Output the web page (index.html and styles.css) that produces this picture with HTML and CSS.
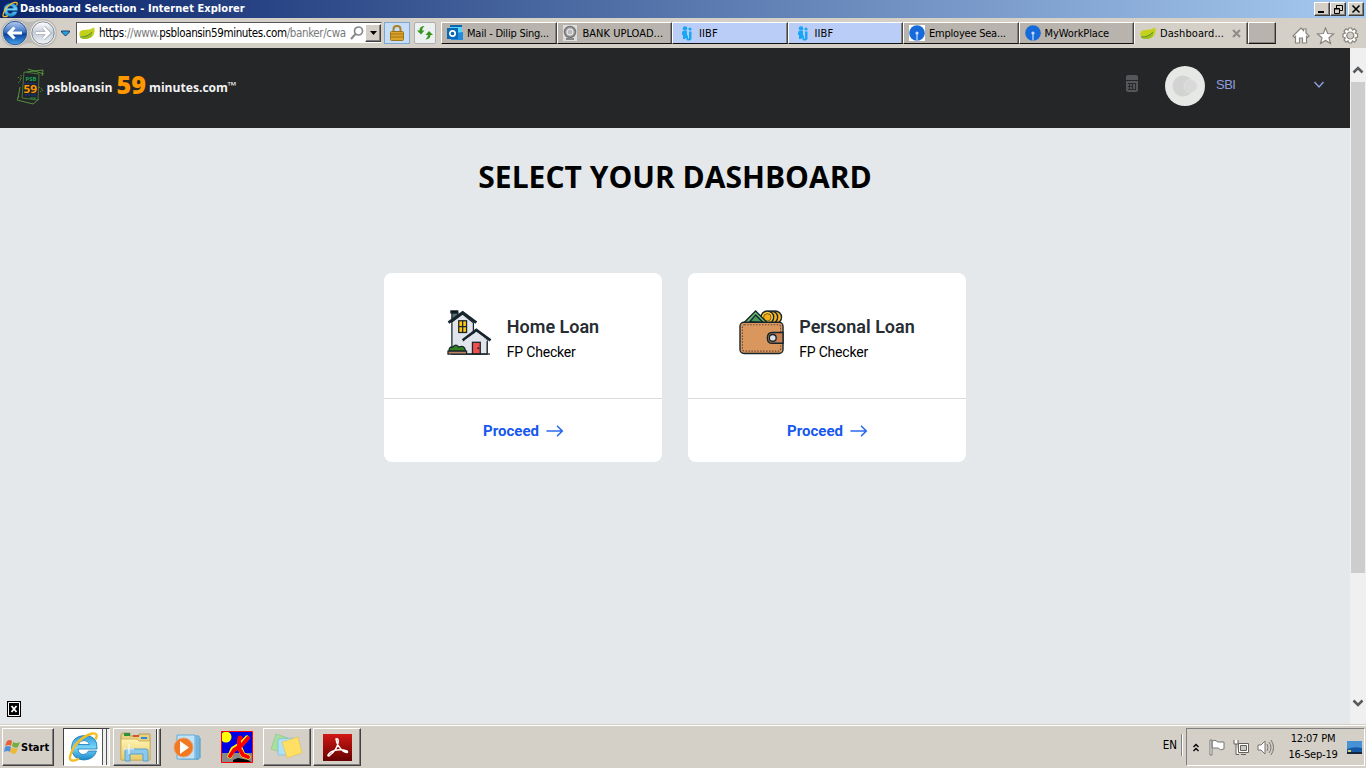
FILE: index.html
```html
<!DOCTYPE html>
<html lang="en">
<head>
<meta charset="utf-8">
<title>Dashboard Selection</title>
<link rel="stylesheet" href="styles.css">
</head>
<body>
<svg width="0" height="0" class="defs">
<defs>
<linearGradient id="ball" x1="0" y1="0" x2="0" y2="1"><stop offset="0" stop-color="#b4cdef"/><stop offset=".45" stop-color="#3e74c4"/><stop offset=".55" stop-color="#0c439c"/><stop offset="1" stop-color="#45a4ee"/></linearGradient>
<linearGradient id="pale" x1="0" y1="0" x2="0" y2="1"><stop offset="0" stop-color="#fff"/><stop offset=".5" stop-color="#c3cbd8"/><stop offset="1" stop-color="#f3f6fa"/></linearGradient>
<linearGradient id="ieblue" x1="0" y1="0" x2="0" y2="1"><stop offset="0" stop-color="#2c9ddd"/><stop offset=".5" stop-color="#79d5fa"/><stop offset="1" stop-color="#1688cb"/></linearGradient>
<linearGradient id="gold" x1="0" y1="0" x2="0" y2="1"><stop offset="0" stop-color="#fff3b2"/><stop offset="1" stop-color="#e8cb68"/></linearGradient>
<linearGradient id="red" x1="0" y1="0" x2="0" y2="1"><stop offset="0" stop-color="#d21713"/><stop offset="1" stop-color="#650303"/></linearGradient>
<symbol id="ie" viewBox="0 0 32 32"><path d="M28.500 20H20.500Q18.500 23.500 15.500 23.500Q10.500 23.500 10 18H29Q30 4.500 16.500 4.500Q4 5 3.500 16.500Q4 28.500 16 29Q26 28.500 28.500 20ZM10.300 13.500Q11.500 9.500 16 9.500Q20.500 9.700 21.500 13.500Z" fill="url(#ieblue)" stroke="#1679b3" stroke-width=".8" fill-rule="evenodd"/><path d="M27.500 8.500Q31 1.500 24 2.500Q13 5.500 6 16Q-1 29 4 29.500Q7 30 11 27.500" fill="none" stroke="#f4bd26" stroke-width="2.400"/></symbol>
<symbol id="leaf" viewBox="0 0 16 13"><path d="M.5 9Q-.5 3 5 3Q11 3 15 .5Q17 6 13 10Q7 14 .5 9Z" fill="#c5d01d"/><path d="M1 10.500Q9 10 13 4.500Q14 10 9 11.500Q4 13 1 10.500Z" fill="#9dbd20"/><path d="M1 10Q9 10 13 5" fill="none" stroke="#57952f"/></symbol>
<symbol id="iibf" viewBox="0 0 10 15"><g fill="#19a6f5"><circle cx="3" cy="2.500" r="2.300"/><circle cx="8" cy="3" r="1.600"/><path d="M1 5H5V9L6 10V13L4 12L3 13H1V9H0V6ZM7 5.500H9.500V13Q8 15.500 4.500 14V12.500H7Z"/></g></symbol>
<symbol id="sbi" viewBox="0 0 16 16"><circle cx="8" cy="8" r="7.800" fill="#176ad9"/><circle cx="8" cy="8" r="1.600" fill="#c6dfff"/><path d="M7.400 8H8.600V15.500H7.400Z" fill="#c6dfff"/></symbol>
<symbol id="arrow" viewBox="0 0 18 12"><path d="M1 6H16M11.500 1.200L16.300 6L11.500 10.800" fill="none" stroke="#2b6bef" stroke-width="1.600" stroke-linecap="round"/></symbol>
</defs>
</svg>
<div class="screen">
<header class="titlebar">
<svg class="title-icon" width="17" height="17"><use href="#ie"/></svg>
<span class="window-title">Dashboard Selection - Internet Explorer</span>
<div class="window-buttons">
<span class="winbtn"><svg width="12" height="10"><path d="M2 7H8V9H2Z"/></svg></span>
<span class="winbtn"><svg width="12" height="10"><path d="M4.500 1V4M4 1.500H10.500V6.500H8M2.500 4.500H7.500V9.500H2.500ZM2 5H8" fill="none" stroke="#000"/></svg></span>
<span class="winbtn close"><svg width="12" height="10"><path d="M2.500 1.500L9.500 8.500M9.500 1.500L2.500 8.500" stroke="#000" stroke-width="1.600"/></svg></span>
</div>
</header>
<nav class="toolbar">
<svg class="navballs" width="74" height="28" viewBox="0 0 74 28"><path d="M1 14C1 5 8 0 16 0C23 0 22 3 29 3C36 3 35 0 43 0C51 0 57 6 57 14C57 22 51 28 43 28C36 28 36 24 29 24C22 24 23 28 15 28C7 28 1 22 1 14Z" fill="#bcbab5"/><circle cx="15" cy="14" r="12.500" fill="#eee"/><circle cx="15" cy="14" r="11.700" fill="url(#ball)" stroke="#32558d"/><circle cx="43" cy="14" r="12.500" fill="#eee"/><circle cx="43" cy="14" r="11.200" fill="url(#pale)" stroke="#858a91"/><path d="M22 14H9M14.500 8.500L9 14L14.500 19.500" fill="none" stroke="#fff" stroke-width="3"/><path d="M36 14H49M43.500 8.500L49 14L43.500 19.500" fill="none" stroke="#9ca3ad" stroke-width="4"/><path d="M36 14H49M43.500 8.500L49 14L43.500 19.500" fill="none" stroke="#fff" stroke-width="2.600"/><path d="M61.500 12H69.500V13L65.500 17L61.500 13Z" fill="#2aa3dd" stroke="#173d72"/></svg>
<div class="address"><svg width="16" height="13"><use href="#leaf"/></svg><span class="url">https<i>://www.</i>psbloansin59minutes.com<i>/banker/cwa</i></span><svg class="magnify" width="14" height="14"><circle cx="8.500" cy="5" r="4" fill="none" stroke="#85888a" stroke-width="1.700"/><path d="M5.500 8L1 13" stroke="#85888a" stroke-width="2"/></svg><span class="dropdown"><svg width="7" height="4"><path d="M0 0H7L3.500 4Z"/></svg></span></div>
<span class="tool lock"><svg width="14" height="16"><path d="M3.500 8V4Q3.500 1 7 1Q10.500 1 10.500 4V8" fill="none" stroke="#a98228" stroke-width="2"/><rect x=".5" y="6.500" width="13" height="9" rx="1" fill="#dfa326" stroke="#9a741e"/><path d="M1 9H13M1 12H13" stroke="#9e7420"/></svg></span>
<span class="tool refresh"><svg width="16" height="14" fill="#36951c"><path d="M7.500 0Q2.500 0 2.500 4.500H0L4 8.500L7.500 4.500H5Q5 2 7.500 0ZM8.500 13.500Q13.500 13 13.500 9H16L12 5L8.500 9H11Q11 11.500 8.500 13.500Z"/></svg></span>
<div class="tabs">
<div class="tab"><svg width="16" height="16"><path d="M3 0H15V12H3Z" fill="#57d5fa"/><path d="M3 0H15V2H3Z" fill="#1264af"/><path d="M8 8L16 7V15H4V12Z" fill="#238bdc"/><rect y="3" width="11" height="11" fill="#0868b8"/><circle cx="5.500" cy="8.500" r="2.700" fill="none" stroke="#fff" stroke-width="1.700"/></svg><span>Mail - Dilip Sing...</span></div>
<div class="tab"><svg width="14" height="16"><path d="M0 0H14V16H0Z" fill="#ddd"/><circle cx="7" cy="7" r="5.500" fill="#aaa" stroke="#777" stroke-width="1.500"/><circle cx="7" cy="7" r="3" fill="#bbb" stroke="#eee"/><path d="M3 13H11V15H3Z" fill="#888"/></svg><span class="bank">BANK UPLOAD...</span></div>
<div class="tab blue"><svg width="10" height="15"><use href="#iibf"/></svg><span>IIBF</span></div>
<div class="tab blue"><svg width="10" height="15"><use href="#iibf"/></svg><span>IIBF</span></div>
<div class="tab"><svg class="whitebox" width="16" height="16"><use href="#sbi"/></svg><span>Employee Sea...</span></div>
<div class="tab"><svg width="16" height="16"><use href="#sbi"/></svg><span class="work">MyWorkPlace</span></div>
<div class="tab active"><svg width="16" height="13"><use href="#leaf"/></svg><span class="dash">Dashboard...</span><svg class="tabclose" width="9" height="9"><path d="M1 1L8 8M8 1L1 8" stroke="#8d8b88" stroke-width="2"/></svg></div>
<div class="newtab"></div>
</div>
<svg class="browser-icons" width="70" height="18" fill="#fff" stroke="#87837d" stroke-width="1.200"><path d="M1 9L9 1L11.500 3.500V2H14V6L17 9L15.500 10.500L14.500 9.500V16H10.500V11H7.500V16H3.500V9.500L2.500 10.500Z"/><path d="M33.500 1L35.700 6.500L41.500 7L37 10.800L38.500 16.500L33.500 13.500L28.500 16.500L30 10.800L25.500 7L31.300 6.500Z"/><path fill-rule="evenodd" d="M57 1H59.500L60.500 3.200L62.500 1.800L64.500 4L63.200 6L65.500 7V10L63.200 11L64.500 13L62.500 15.200L60.500 13.800L59.500 16H57L56 13.800L54 15.200L52 13L53.300 11L51 10V7L53.300 6L52 4L54 1.800L56 3.200ZM58.300 5A3.500 3.500 0 1 0 58.310 5Z"/></svg>
</nav>
<div class="viewport">
<main class="page">
<header class="site-header">
<svg class="logo" width="224" height="40" viewBox="0 0 224 40"><g fill="none" stroke="#57903b"><path d="M12 2L28 7M10 5L27 3L26 9M3 29L1 33L17 37L23 32M4 20L2 31"/><path d="M2 10L5 13L2 16M5 8V12M23 20L27 23L24 25" stroke-dasharray="1.500 1"/></g><path d="M8 5L23 7L22 33L6 31Z" fill="#1f2428" stroke="#4f8d38" stroke-width=".8"/><text x="9.500" y="14" class="logo-psb" textLength="11" lengthAdjust="spacingAndGlyphs">PSB</text><path d="M8 16.500H21M9 28H21" stroke="#1d3080" stroke-width="1.500" stroke-dasharray="2 1"/><path d="M14 31H20" stroke="#208345" stroke-width="1.300"/><text x="7.500" y="26" class="logo-small" textLength="13.500" lengthAdjust="spacingAndGlyphs">59</text><text x="30.500" y="24.500" class="logo-word" textLength="66" lengthAdjust="spacingAndGlyphs">psbloansin</text><text x="100.500" y="27" class="logo-big" textLength="29.500" lengthAdjust="spacingAndGlyphs">59</text><text x="133" y="24.500" class="logo-word" textLength="79" lengthAdjust="spacingAndGlyphs">minutes.com</text><text x="211.500" y="22" class="logo-tm" textLength="9" lengthAdjust="spacingAndGlyphs">™</text></svg>
<svg class="calculator" width="12" height="17"><path d="M2 0H10Q12 0 12 2V5H0V2Q0 0 2 0ZM0 6H12V15Q12 17 10 17H2Q0 17 0 15Z" fill="#55565a"/><path d="M2 8.500H10M2 11.500H7M2 14.500H10M3.500 8V15M6.500 8V15M9.500 8V15" stroke="#292a2c"/></svg>
<svg class="avatar" width="40" height="40"><circle cx="20" cy="20" r="20" fill="#e5e8e5"/><circle cx="18" cy="20" r="10.500" fill="#d3d3d3"/><circle cx="25.500" cy="20" r="6.500" fill="#d9d9d9" stroke="#e3e3e3" stroke-width=".6"/></svg>
<span class="user">SBI</span>
<svg class="chevron" width="12" height="8"><path d="M1.500 1L6 6L10.500 1" fill="none" stroke="#8e9ddd" stroke-width="1.500"/></svg>
</header>
<h1>SELECT YOUR DASHBOARD</h1>
<div class="cards">
<section class="card">
<div class="product"><svg width="45" height="45" viewBox="0 0 46 46" stroke="#17262c" stroke-width="1.300"><path d="M5 12L16 4L27 13V24L41 31V45H5Z" fill="#e2e5eb"/><path d="M5 3H11V7L5 12Z" fill="#61717b"/><path d="M4 1H11V3H4Z"/><path d="M1.500 13L16 2.500L30 13M16 31L30 20.500L44.500 31" fill="none" stroke-width="2.800"/><rect x="12" y="11" width="8" height="12" fill="#ffc80b"/><path d="M16 11V23M12 17H20"/><path d="M18 31L30 22.500L41 31V44H18Z" fill="#e2e5eb" stroke="none"/><path d="M41 32V44" fill="none"/><rect x="26" y="33" width="8" height="12" fill="#ef4f4e"/><path d="M2 42Q2 37 6 38Q9 34 12 38Q18 35 19 42Z" fill="#327f1d"/><path d="M1 42H20V45H1Z" fill="#bd8263"/><path d="M20 45H44"/><circle cx="32" cy="39" r=".4"/></svg><div><h2>Home Loan</h2><p>FP Checker</p></div></div>
<a class="proceed">Proceed<svg width="18" height="12"><use href="#arrow"/></svg></a>
</section>
<section class="card">
<div class="product"><svg width="45" height="45" viewBox="0 0 46 46" stroke="#17252b" stroke-width="1.400"><circle cx="37" cy="7.500" r="6.500" fill="#f7b624"/><circle cx="33" cy="7.500" r="6.500" fill="#f7b624"/><circle cx="29" cy="7.500" r="6.500" fill="#ffc632"/><circle cx="29" cy="7.500" r="3.800" fill="#f4ae17" stroke-width=".6"/><path d="M5 13L17 1L29 13Z" fill="#69bd71"/><path d="M11 12L17 5L25 13Z" fill="#48985b"/><rect x="1" y="12.500" width="44" height="32" rx="4" fill="#d9965d"/><rect x="3.500" y="15" width="39" height="27" rx="2" fill="none" stroke="#694837" stroke-width="1.100" stroke-dasharray="1.500 1.500"/><path d="M45 23H34Q29 23 29 28.500Q29 34 34 34H45Z" fill="#c88050"/><circle cx="34.500" cy="28.500" r="3.500" fill="#dbe0e7"/></svg><div><h2>Personal Loan</h2><p>FP Checker</p></div></div>
<a class="proceed">Proceed<svg width="18" height="12"><use href="#arrow"/></svg></a>
</section>
</div>
<svg class="missing" width="14" height="16"><path d="M0 0H14V16H0Z"/><path d="M1.500 1.500H12.500V14.500H1.500Z" fill="none" stroke="#fff"/><path d="M4.500 5L9.500 11M9.500 5L4.500 11" stroke="#fff" stroke-width="1.800"/></svg>
</main>
<aside class="scrollbar"><svg width="12" height="8"><path d="M1.500 6.500L6 2L10.500 6.500" fill="none" stroke="#58595b" stroke-width="2.500"/></svg><div class="thumb"></div><svg class="down" width="12" height="8"><path d="M1.500 1.500L6 6L10.500 1.500" fill="none" stroke="#58595b" stroke-width="2.500"/></svg></aside>
</div>
<footer class="taskbar">
<button class="start"><svg width="16" height="14"><path d="M3 1Q6 -1 8 1L7 6Q5 4 1 6Z" fill="#e66137"/><path d="M9 2Q12 4 16 2L14 7Q11 9 8 6Z" fill="#75ae43"/><path d="M1 7Q4 5 7 7L6 12Q4 10 0 12Z" fill="#548ed7"/><path d="M8 7Q10 10 14 8L12 13Q9 15 6 12Z" fill="#edb92f"/></svg><span>Start</span></button>
<div class="task ie-task"><svg width="32" height="32"><use href="#ie"/></svg></div>
<div class="task folder-task"><svg width="34" height="32"><path d="M2 4Q2 2 4 2H11V5H20V3H31V29H2Z" fill="#ead181" stroke="#b79b55"/><path d="M5 2H11V5H5Z" fill="#27943c"/><path d="M14 4H20V6H14Z" fill="#d3562b"/><path d="M22 6H28V8H22Z" fill="#2b8ad7"/><path d="M2 8H18L20 10H31V29H2Z" fill="url(#gold)" stroke="#cfb35d"/><path d="M6 29V20Q6 18 8 18H27Q29 18 29 20V30H24V23H11V30H6Z" fill="#8bc9ed" stroke="#5a9fcb"/><path d="M10 13V23M5 18H15" stroke="#fff" stroke-width="1"/></svg></div>
<svg class="media" width="30" height="28"><path d="M8 2H26V25H8Z" fill="#a6d1ed" stroke="#4b9fd2"/><path d="M4 1H22V25H4Z" fill="#c1e3f7" stroke="#64abd7"/><path d="M24 3V26M27 4V24" stroke="#4195cb"/><circle cx="10.500" cy="13.500" r="9.500" fill="#f27822" stroke="#e6a475"/><path d="M7 7L16 13.500L7 20Z" fill="#fff"/></svg>
<svg class="runner" width="32" height="32"><path d="M.5 .5H31.500V31.500H.5Z" fill="#0000e7"/><path d="M1 22H31V31H1Z" fill="#888"/><circle cx="5" cy="6" r="5.500" fill="#ff0"/><path d="M12 29L17 27L27 29L30 31H12Z"/><path d="M26 7L20 13L12 18L9 25M19 17L22 24L27 26" stroke="#ff0" stroke-width="5" fill="none" stroke-linejoin="round" stroke-linecap="round"/><path d="M27 7L21 14L13 19L9 25M18 9V17L22 24L27 26" stroke="#f00" stroke-width="4" fill="none" stroke-linejoin="round" stroke-linecap="round"/><circle cx="19" cy="7" r="2.500" fill="#f00"/><path d="M.5 .5H31.500V31.500H.5Z" fill="none" stroke="#f00"/></svg>
<div class="task sticky"><svg width="34" height="28"><path d="M6 1L18 5L13 20L1 16Z" fill="#a7df9c" stroke="#82bd7b" stroke-width=".5"/><path d="M8 6L23 5L24 22L8 22Z" fill="#aee0f8" stroke="#6baed9" stroke-width=".5"/><path d="M12 9L28 4L32 20L17 25Z" fill="#ffdf64" stroke="#dab746" stroke-width=".5"/></svg></div>
<div class="task pdf"><svg width="29" height="27"><path d="M0 0H29V27H0Z" fill="url(#red)"/><path d="M13 5Q16 4 15 9Q14 16 6 22Q3 22 8 18Q15 14 24 17Q26 20 20 17Q14 12 13 5Z" fill="none" stroke="#fff" stroke-width="1.500"/></svg></div>
<span class="language">EN</span>
<div class="tray"><svg class="caret" width="6" height="9"><path d="M.5 4L3 1.500L5.500 4M.5 8L3 5.500L5.500 8" fill="none" stroke="#000" stroke-width="1.400"/></svg><svg width="17" height="17" fill="#fff" stroke="#777"><path d="M1 1H3V16H1ZM3 2Q6 0 9 3H15V10Q11 12 9 9H3Z"/></svg><svg width="17" height="17" fill="#fff" stroke="#66625b"><path d="M5.500 4.500H15.500V13.500H5.500ZM8 15.500H13M1 1V5H5V1M3 5V15.500H6"/><path d="M7.500 6.500H13.500V11.500H7.500Z" fill="#c8c8c4"/></svg><svg width="17" height="17" fill="#fff" stroke="#77736d"><path d="M1 6H4L8 2V15L4 11H1Z"/><path d="M10 5Q12 8.500 10 12M12 3Q16 8.500 12 14M14 1Q19 8.500 14 16" fill="none"/></svg><div class="clock"><span>12:07 PM</span><span>16-Sep-19</span></div><svg width="15" height="13"><path d="M0 0H15V13H0Z" fill="#1558a5"/><path d="M0 0H15V7Q7 5 0 8Z" fill="#4692d5"/><path d="M0 11H15V13H0Z" fill="#14243e"/><path d="M1 9H4V11H1Z" fill="#d9ce63"/></svg></div>
</footer>
</div>
</body>
</html>
```

FILE: styles.css
```css
* { box-sizing: border-box; }
body { margin: 0; overflow: hidden; font-family: Roboto, sans-serif; }
svg { display: block; flex-shrink: 0; }
.defs { position: absolute; }
.screen { width: 1366px; height: 768px; display: flex; flex-direction: column; background: #d4d0c8; }
.titlebar { height: 18px; display: flex; align-items: center; padding: 0 2px; background: linear-gradient(90deg, #0a246a, #a6caf0); font-family: "DejaVu Sans Condensed", "DejaVu Sans", sans-serif; }
.window-title { color: #fff; font-size: 11px; font-weight: bold; line-height: 18px; margin-left: 1px; letter-spacing: .06px; white-space: nowrap; }
.window-buttons { margin-left: auto; display: flex; }
.winbtn { width: 16px; height: 14px; padding: 1px; background: #d4d0c8; border: 1px solid; border-color: #fff #404040 #404040 #fff; box-shadow: inset -1px -1px #808080; }
.close { margin-left: 2px; }
.toolbar { height: 30px; display: flex; align-items: flex-start; font-family: "DejaVu Sans Condensed", "DejaVu Sans", sans-serif; font-size: 11px; }
.navballs { margin-top: 1px; }
.address { height: 22px; width: 306px; display: flex; align-items: center; padding-left: 2px; margin: 4px 0 0 2px; background: #fff; border: 1px solid; border-color: #555 #d4d0c8 #d4d0c8 #555; }
.url { width: 249px; margin: 0 2px 0 4px; font-size: 11.500px; letter-spacing: -.37px; white-space: nowrap; }
.url i { color: #77797b; font-style: normal; }
.dropdown { width: 16px; height: 18px; display: grid; place-items: center; margin-left: 1px; background: #d4d0c8; border: 1px solid; border-color: #fff #404040 #404040 #fff; box-shadow: inset -1px -1px #808080; }
.tool { display: grid; place-items: center; height: 22px; margin-top: 4px; }
.lock { width: 26px; margin-left: 2px; background: #c6ddf8; border: 1px solid #82a5cd; }
.refresh { width: 22px; margin-left: 4px; border: 1px solid #aeb0b1; border-radius: 2px; background: #edf0f1; }
.tabs { display: flex; margin: 4px 0 0 5px; height: 22px; }
.tab { display: flex; align-items: center; width: 115.500px; height: 22px; padding-left: 5px; gap: 4px; background: #b8b4ad; border: 1px solid; border-color: #fff #444 #111 #fff; box-shadow: inset -1px 0 #85817b; letter-spacing: -.22px; white-space: nowrap; }
.tab.blue { background: #b9cdf7; padding-left: 9px; gap: 7px; letter-spacing: .1px; }
.bank { letter-spacing: .02px; margin-left: 2px; }
.work { letter-spacing: -.1px; }
.whitebox { background: #fff; }
.tab.active { width: 114px; background: #d4d0c8; border-bottom: 0; }
.dash { letter-spacing: .08px; }
.tabclose { margin-left: 4px; }
.newtab { width: 28px; background: #b8b4ad; border: 1px solid; border-color: #fff #333 #111 #fff; box-shadow: inset -1px -1px #85817b; }
.browser-icons { margin: 9px 0 0 auto; margin-right: 4px; }
.viewport { display: flex; height: 676px; }
.page { width: 1350px; display: flex; flex-direction: column; align-items: center; background: #e4e8eb; }
.site-header { width: 100%; height: 80px; display: flex; align-items: flex-start; background: #252628; }
.logo { margin: 19px 0 0 16px; font-family: "Open Sans", sans-serif; font-weight: bold; }
.logo-psb { font-size: 6px; fill: #1ba650; }
.logo-small { font-size: 11px; fill: #ff9800; }
.logo-word { font-size: 12px; fill: #f2f2f2; }
.logo-big { font-size: 24px; font-weight: 800; fill: #ff9800; }
.logo-tm { font-size: 10px; fill: #eee; }
.calculator { margin: 27px 0 0 886px; }
.avatar { margin: 18px 0 0 27px; }
.user { margin: 28px 0 0 11px; color: #8f9ddd; font-size: 13px; line-height: 18px; letter-spacing: -.5px; font-family: "Liberation Sans", sans-serif; }
.chevron { margin: 33px 25px 0 auto; }
h1 { margin: 28px 0 76px; font: bold 30px/41px "Open Sans", sans-serif; color: #000; white-space: nowrap; }
.cards { display: flex; gap: 26px; }
.card { width: 278px; height: 189px; display: flex; flex-direction: column; border-radius: 8px; background: #fff; }
.product { display: flex; justify-content: center; gap: 15px; height: 126px; padding-top: 37px; border-bottom: 1px solid #d9dbdc; }
h2 { margin: 6px 0 0; font-size: 18px; font-weight: 600; line-height: 21px; color: #272d33; white-space: nowrap; }
p { margin: 6px 0 0; font-size: 14px; line-height: 18px; letter-spacing: -.2px; color: #000; }
.proceed { display: flex; flex: 1; justify-content: center; align-items: center; gap: 7px; padding-left: 1px; font-size: 15px; font-weight: 700; color: #1658ed; }
.missing { align-self: flex-start; margin: auto 0 7px 7px; }
.scrollbar { width: 16px; display: flex; flex-direction: column; align-items: center; background: #f0f0f0; padding: 18px 0 17px; }
.thumb { width: 14px; height: 491px; margin-top: 8px; background: #cdcdcd; }
.down { margin-top: auto; }
.taskbar { height: 44px; display: flex; align-items: flex-start; padding: 3px 2px 0; border-top: 1px solid #d4d0c8; box-shadow: inset 0 1px #fff; font-family: "DejaVu Sans Condensed", "DejaVu Sans", sans-serif; font-size: 11px; }
.start { width: 52px; height: 38px; padding: 0 1px; display: flex; align-items: center; gap: 1px; background: #d4d0c8; border: 1px solid; border-color: #fff #404040 #404040 #fff; box-shadow: inset -1px -1px #808080; font: bold 11px "DejaVu Sans Condensed", sans-serif; }
.task { width: 48px; height: 38px; display: grid; place-items: center; background: #d4d0c8; border: 1px solid; border-color: #fff #404040 #404040 #fff; box-shadow: inset -1px -1px #808080; }
.ie-task { width: 47px; margin-left: 9px; padding-right: 6px; background: linear-gradient(90deg, #fff 38px, #555 38px, #555 39px, #eee 39px, #eee 42px, #555 42px, #555 43px, #eee 43px); border-color: #404040 #fff #fff #404040; box-shadow: none; }
.folder-task { margin-left: 3px; padding-right: 3px; background: linear-gradient(90deg, #d4d0c8 42px, #404040 42px, #404040 43px, #fff 43px, #fff 44px, #d4d0c8 44px); }
.media { margin: 6px 0 0 12px; }
.runner { margin: 3px 0 0 18px; }
.sticky { margin-left: 10px; }
.pdf { margin-left: 2px; }
.language { display: flex; align-items: center; height: 22px; margin: 6px 0 0 auto; padding-right: 4px; border-right: 1px solid #808080; box-shadow: 1px 0 #fff; font-size: 11.500px; }
.tray { display: flex; align-items: center; width: 179px; height: 38px; margin-left: 4px; padding-left: 6px; gap: 7px; border: 1px solid; border-color: #808080 #fff #fff #808080; margin-right: -1px; }
.caret { margin-right: 3px; }
.clock { display: flex; flex-direction: column; align-items: center; line-height: 16px; width: 54px; margin: 0 0 0 5px; letter-spacing: -.2px; white-space: nowrap; }
```
